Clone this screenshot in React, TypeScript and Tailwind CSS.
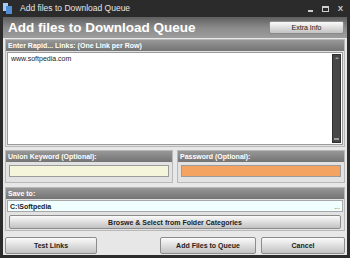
import React from "react";

function SectionHead({ children }: { children: React.ReactNode }) {
  return (
    <div className="flex h-[11px] shrink-0 items-center bg-gradient-to-b from-[#979797] to-[#747474] px-[2px] text-[7px] font-bold leading-none whitespace-nowrap text-white">
      {children}
    </div>
  );
}

function Btn({ children, className = "" }: { children: React.ReactNode; className?: string }) {
  return (
    <div
      className={`flex items-center justify-center whitespace-nowrap rounded-[2px] border border-[#8c8c8c] bg-gradient-to-b from-[#fbfbfb] via-[#dedede] to-[#c2c2c2] text-[7px] font-bold leading-none text-[#222] ${className}`}
    >
      {children}
    </div>
  );
}

export default function App() {
  return (
    <div
      className="flex h-[258px] w-[350px] flex-col overflow-hidden bg-[#2b2b2b] text-[#222]"
      style={{ fontFamily: "'Liberation Sans', Arial, sans-serif" }}
    >
      {/* title bar */}
      <div className="flex h-[17px] shrink-0 items-center pl-[3px] pr-[7px]">
        <svg width="9" height="11" viewBox="0 0 9 11">
          <rect x="0" y="0" width="5" height="8" fill="#a9cdf2" />
          <rect x="3" y="3" width="6" height="8" fill="#4f8ed6" />
        </svg>
        <span className="ml-[8px] whitespace-nowrap text-[8.5px] text-[#e6e6e6]">Add files to Download Queue</span>
        <div className="ml-auto flex items-center gap-[9px] text-[#cfcfcf]">
          <span className="mt-[4px] block h-[2px] w-[5px] bg-[#cfcfcf]" />
          <span className="block h-[6px] w-[7px] border border-t-2 border-[#cfcfcf]" />
          <span className="text-[8px] font-bold leading-none">X</span>
        </div>
      </div>

      {/* body */}
      <div className="mx-[3px] flex h-[238px] flex-col bg-[#e7e7e7]">
        <div className="flex h-[21px] shrink-0 items-center bg-gradient-to-b from-[#5f5f5f] via-[#8a8a8a] to-[#9d9d9d] pl-[5px] pr-[3px]">
          <span className="whitespace-nowrap text-[13.5px] font-bold leading-none text-white">
            Add files to Download Queue
          </span>
          <Btn className="ml-auto h-[13px] w-[75px] font-normal">Extra Info</Btn>
        </div>

        <div className="flex flex-col px-[2px] pt-[1px]">
          {/* links */}
          <div className="flex h-[108px] flex-col border border-[#b8b8b8] bg-[#e2e2e2]">
            <SectionHead>Enter Rapid... Links: (One Link per Row)</SectionHead>
            <div className="mx-[1px] mt-[1px] flex h-[93px] border border-[#9a9a9a] bg-white">
              <div className="flex-1 px-[3px] pt-[2px] text-[7px] leading-none">www.softpedia.com</div>
              <div className="my-[1px] mr-[1px] flex w-[9px] flex-col items-center justify-between border border-[#2f2f2f] bg-[#474747] py-[2px]">
                <span className="block h-0 w-0 border-x-[2px] border-b-[2px] border-x-transparent border-b-[#9a9a9a]" />
                <span className="block h-[2px] w-[5px] bg-[#9a9a9a]" />
              </div>
            </div>
          </div>

          {/* optional */}
          <div className="mt-[3px] flex h-[33px] gap-[4px]">
            <div className="flex flex-1 flex-col border border-[#b8b8b8] bg-[#e2e2e2]">
              <SectionHead>Union Keyword (Optional):</SectionHead>
              <div className="mx-[3px] mt-[3px] h-[12px] border border-[#9c9c9c] bg-[#f5f5dc]" />
            </div>
            <div className="flex flex-1 flex-col border border-[#b8b8b8] bg-[#e2e2e2]">
              <SectionHead>Password (Optional):</SectionHead>
              <div className="mx-[3px] mt-[3px] h-[12px] border border-[#9c9c9c] bg-[#f4a460]" />
            </div>
          </div>

          {/* save to */}
          <div className="mt-[4px] flex h-[44px] flex-col border border-[#b8b8b8] bg-[#e2e2e2]">
            <SectionHead>Save to:</SectionHead>
            <div className="mx-[1px] mt-[1px] flex h-[12px] items-center border border-[#a8a8a8] bg-[#f0ffff] px-[2px] text-[7px] leading-none">
              <span className="font-bold">C:\Softpedia</span>
              <span className="ml-auto text-[#555]">...</span>
            </div>
            <Btn className="mx-[3px] mt-[3px] h-[14px]">Broswe &amp; Select from Folder Categories</Btn>
          </div>

          {/* buttons */}
          <div className="mt-[6px] flex items-center">
            <Btn className="h-[17px] w-[92px]">Test Links</Btn>
            <Btn className="ml-auto h-[17px] w-[96px]">Add Files to Queue</Btn>
            <Btn className="ml-[5px] h-[17px] w-[84px]">Cancel</Btn>
          </div>
        </div>
      </div>
    </div>
  );
}
